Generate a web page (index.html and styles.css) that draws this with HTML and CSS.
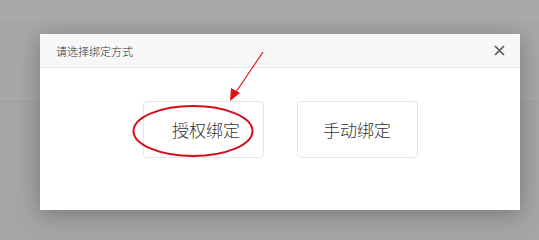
FILE: index.html
```html
<!DOCTYPE html>
<html lang="zh-CN">
<head>
<meta charset="utf-8">
<link rel="stylesheet" href="styles.css">
</head>
<body>
<div class="page">
  <div class="topbar"></div>
  <div class="band"></div>
  <div class="rest"></div>
</div>
<div class="modal">
  <div class="modal-head">
    <span class="modal-title">请选择绑定方式</span>
    <span class="modal-close">
      <svg width="11" height="11" viewBox="0 0 11 11"><path d="M1 1L10 10M10 1L1 10" stroke="#555" stroke-width="1.6" fill="none"/></svg>
    </span>
  </div>
  <div class="modal-body">
    <div class="choice choice-first">授权绑定</div>
    <div class="choice">手动绑定</div>
  </div>
</div>
<svg class="annot" width="539" height="240" viewBox="0 0 539 240">
  <line x1="263" y1="52" x2="236" y2="92" stroke="#e01010" stroke-width="1.2"/>
  <polygon points="230,101 231,88 240,93" fill="#e01010"/>
  <ellipse cx="193" cy="131" rx="59.5" ry="25" fill="none" stroke="#d40f1a" stroke-width="2"/>
</svg>
</body>
</html>
```
FILE: styles.css
```css
html, body {
  margin: 0;
  padding: 0;
}
body {
  width: 539px;
  height: 240px;
  overflow: hidden;
  background: #a7a7a7;
  font-family: "Noto Sans CJK SC", "Noto Sans", sans-serif;
  position: relative;
}
.page {
  display: flex;
  flex-direction: column;
}
.topbar {
  height: 17px;
  border-bottom: 1px solid #b0b0b0;
  background: #a9a9a9;
}
.band {
  height: 80px;
  border-bottom: 1px solid #adadad;
  background: #a7a7a7;
}
.rest {
  height: 141px;
  background: #a5a5a5;
}
.modal {
  position: absolute;
  left: 40px;
  top: 34px;
  width: 480px;
  height: 176px;
  background: #fff;
  box-shadow: 0 4px 22px rgba(0, 0, 0, 0.28);
}
.modal-head {
  height: 34px;
  box-sizing: border-box;
  background: #f7f7f7;
  border-bottom: 1px solid #ebebeb;
  display: flex;
  align-items: center;
  justify-content: space-between;
  padding: 0 15px 0 16px;
}
.modal-title {
  font-size: 11px;
  font-weight: 300;
  color: #333;
}
.modal-close {
  display: flex;
  width: 11px;
  height: 11px;
}
.modal-body {
  display: flex;
  justify-content: center;
  gap: 33px;
  padding-top: 33px;
}
.choice {
  width: 121px;
  height: 57px;
  box-sizing: border-box;
  border: 1px solid #e6e6e6;
  border-radius: 4px;
  display: flex;
  align-items: center;
  justify-content: center;
  font-size: 17px;
  font-weight: 300;
  color: #333;
}
.choice-first {
  padding-left: 6px;
}
.annot {
  position: absolute;
  left: 0;
  top: 0;
}
```
